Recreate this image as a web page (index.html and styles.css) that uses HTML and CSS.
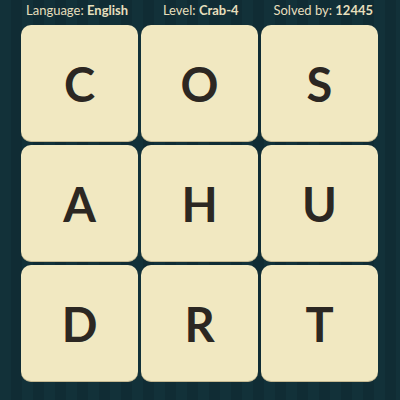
FILE: index.html
```html
<!DOCTYPE html>
<html>
<head>
<meta charset="utf-8">
<link rel="stylesheet" href="styles.css">
</head>
<body>
<div class="page">
  <div class="header">
    <span class="info">Language: <b>English</b></span>
    <span class="info">Level: <b>Crab-4</b></span>
    <span class="info">Solved by: <b>12445</b></span>
  </div>
  <div class="board">
    <div class="tile">C</div>
    <div class="tile">O</div>
    <div class="tile">S</div>
    <div class="tile">A</div>
    <div class="tile">H</div>
    <div class="tile">U</div>
    <div class="tile">D</div>
    <div class="tile">R</div>
    <div class="tile">T</div>
  </div>
</div>
</body>
</html>
```
FILE: styles.css
```css
html, body {
  margin: 0;
  padding: 0;
}
body {
  width: 400px;
  height: 400px;
  overflow: hidden;
  background: repeating-linear-gradient(90deg, #123139 0 11px, #102c34 11px 22px);
  font-family: "Lato", "Open Sans", sans-serif;
}
.page {
  display: flex;
  flex-direction: column;
}
.header {
  height: 25px;
  display: flex;
  align-items: center;
  justify-content: space-between;
  padding: 0 27px 0 26px;
  box-sizing: border-box;
  color: #e6dfbd;
  font-size: 13px;
  line-height: 1;
  margin-top: -2px;
  margin-bottom: 2px;
}
.info b {
  font-weight: 700;
}
.board {
  display: grid;
  grid-template-columns: repeat(3, 117px);
  grid-auto-rows: 117px;
  gap: 3px;
  padding-left: 21px;
}
.tile {
  background: #f1e8c1;
  border-radius: 10px;
  display: flex;
  align-items: center;
  justify-content: center;
  color: #2c2722;
  font-size: 47px;
  font-weight: 700;
  box-shadow: inset 0 -1px 0 rgba(120, 100, 60, 0.35);
}
```
